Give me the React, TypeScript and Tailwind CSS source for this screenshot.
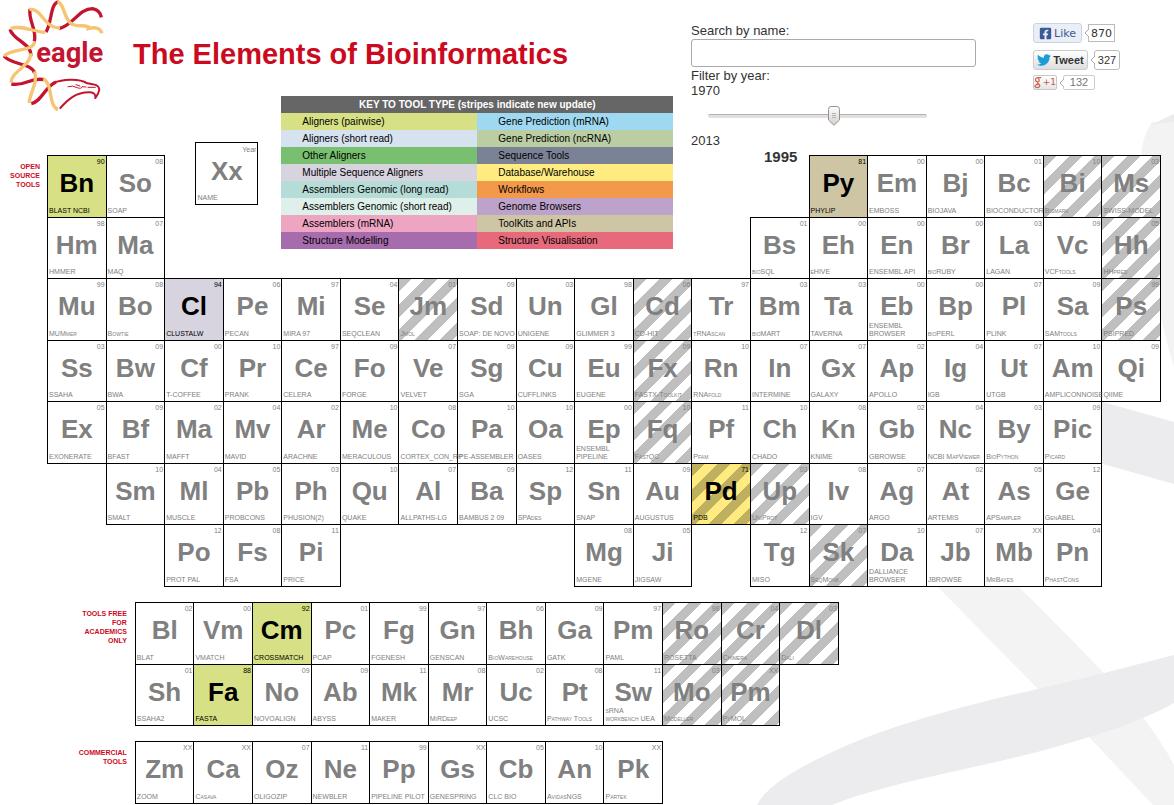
import { useState } from "react";
import { FaFacebookSquare, FaTwitter } from "react-icons/fa";

type Tool = { col: number; row: number; symbol: string; year: string; name: string; striped?: boolean; tone?: string };

const TONES: Record<string, string> = {
  pairwise: "bg-[#d7e084]",
  multiple: "bg-[#d7d3df]",
  toolkit: "bg-[#cec5a5]",
  database: "bg-[#ffeb80]",
};

const TONE_OF: Record<string, string> = {
  "BLAST NCBI": "pairwise",
  CLUSTALW: "multiple",
  PHYLIP: "toolkit",
  PDB: "database",
  CROSSMATCH: "pairwise",
  FASTA: "pairwise",
};

/* A run is a strip of neighbouring tools: "Symbol|year|name", with a trailing "|*" for a recent update. */
function run(row: number, startCol: number, items: string[]): Tool[] {
  return items.map((item, i) => {
    const [symbol, year, name, mark] = item.split("|");
    return { col: startCol + i, row, symbol, year, name, striped: mark === "*", tone: TONE_OF[name] };
  });
}

const OPEN_SOURCE: Tool[] = [
  ...run(1, 1, ["Bn|90|BLAST NCBI", "So|08|SOAP"]),
  ...run(1, 14, ["Py|81|PHYLIP", "Em|00|EMBOSS", "Bj|00|BIOJAVA", "Bc|01|BIOCONDUCTOR", "Bi|10|Bismark|*", "Ms|03|SWISS-MODEL|*"]),
  ...run(2, 1, ["Hm|98|HMMER", "Ma|07|MAQ"]),
  ...run(2, 13, ["Bs|01|bioSQL", "Eh|00|eHIVE", "En|00|ENSEMBL API", "Br|00|bioRUBY", "La|03|LAGAN", "Vc|09|VCFtools", "Hh|05|HHpred|*"]),
  ...run(3, 1, [
    "Mu|99|MUMmer", "Bo|08|Bowtie", "Cl|94|CLUSTALW", "Pe|06|PECAN", "Mi|97|MIRA 97", "Se|04|SEQCLEAN", "Jm|01|Jmol|*",
    "Sd|09|SOAP: DE NOVO", "Un|03|UNIGENE", "Gl|98|GLIMMER 3", "Cd|06|CD-HIT|*", "Tr|97|tRNAscan", "Bm|03|bioMART",
    "Ta|03|TAVERNA", "Eb|00|ENSEMBL\nBROWSER", "Bp|00|bioPERL", "Pl|07|PLINK", "Sa|09|SAMtools", "Ps|99|PSIPRED|*",
  ]),
  ...run(4, 1, [
    "Ss|03|SSAHA", "Bw|09|BWA", "Cf|00|T-COFFEE", "Pr|10|PRANK", "Ce|97|CELERA", "Fo|09|FORGE", "Ve|07|VELVET", "Sg|09|SGA",
    "Cu|09|CUFFLINKS", "Eu|99|EUGENE", "Fx|09|FASTX-Toolkit|*", "Rn|10|RNAfold", "In|07|INTERMINE", "Gx|07|GALAXY",
    "Ap|02|APOLLO", "Ig|04|IGB", "Ut|07|UTGB", "Am|10|AMPLICONNOISE", "Qi|09|QIIME",
  ]),
  ...run(5, 1, [
    "Ex|05|EXONERATE", "Bf|09|BFAST", "Ma|02|MAFFT", "Mv|04|MAVID", "Ar|02|ARACHNE", "Me|10|MERACULOUS", "Co|08|CORTEX_CON_RP",
    "Pa|10|PE-ASSEMBLER", "Oa|10|OASES", "Ep|00|ENSEMBL\nPIPELINE", "Fq|10|FastQC|*", "Pf|11|Pfam", "Ch|10|CHADO",
    "Kn|08|KNIME", "Gb|02|GBROWSE", "Nc|04|NCBI MapViewer", "By|03|BioPython", "Pic|09|Picard",
  ]),
  ...run(6, 2, [
    "Sm|10|SMALT", "Ml|04|MUSCLE", "Pb|05|PROBCONS", "Ph|03|PHUSION(2)", "Qu|10|QUAKE", "Al|07|ALLPATHS-LG", "Ba|09|BAMBUS 2 09",
    "Sp|12|SPAdes", "Sn|11|SNAP", "Au|09|AUGUSTUS", "Pd|71|PDB|*", "Up|03|UniProt|*", "Iv|08|IGV", "Ag|07|ARGO",
    "At|02|ARTEMIS", "As|05|APSampler", "Ge|12|GenABEL",
  ]),
  ...run(7, 3, ["Po|12|PROT PAL", "Fs|08|FSA", "Pi|11|PRICE"]),
  ...run(7, 10, ["Mg|08|MGENE", "Ji|05|JIGSAW"]),
  ...run(7, 13, ["Tg|12|MISO", "Sk|07|SeqMonk|*", "Da|10|DALLIANCE\nBROWSER", "Jb|07|JBROWSE", "Mb|XX|MrBayes", "Pn|04|PhastCons"]),
];

const ACADEMIC: Tool[] = [
  ...run(1, 1, [
    "Bl|02|BLAT", "Vm|00|VMATCH", "Cm|92|CROSSMATCH", "Pc|01|PCAP", "Fg|99|FGENESH", "Gn|97|GENSCAN", "Bh|06|BioWarehouse",
    "Ga|09|GATK", "Pm|97|PAML", "Ro|98|ROSETTA|*", "Cr|04|Chimera|*", "Dl|03|Dali|*",
  ]),
  ...run(2, 1, [
    "Sh|01|SSAHA2", "Fa|88|FASTA", "No|09|NOVOALIGN", "Ab|09|ABYSS", "Mk|11|MAKER", "Mr|08|MiRDeep", "Uc|02|UCSC",
    "Pt|08|Pathway Tools", "Sw|11|sRNA\nworkbench UEA", "Mo|03|Modeller|*", "Pm|XX|PyMOL|*",
  ]),
];

const COMMERCIAL: Tool[] = run(1, 1, [
  "Zm|XX|ZOOM", "Ca|XX|Casava", "Oz|07|OLIGOZIP", "Ne|11|NEWBLER", "Pp|99|PIPELINE PILOT", "Gs|XX|GENESPRING",
  "Cb|05|CLC BIO", "An|10|AvidasNGS", "Pk|XX|Partek",
]);

const KEY_ROWS = [
  ["Aligners (pairwise)", "bg-[#d7e084]", "Gene Prediction (mRNA)", "bg-[#9ed8f1]"],
  ["Aligners (short read)", "bg-[#d6e2f0]", "Gene Prediction (ncRNA)", "bg-[#bbcda3]"],
  ["Other Aligners", "bg-[#78bf70]", "Sequence Tools", "bg-[#7b8296]"],
  ["Multiple Sequence Aligners", "bg-[#d7d3df]", "Database/Warehouse", "bg-[#ffec80]"],
  ["Assemblers Genomic (long read)", "bg-[#b5dcd7]", "Workflows", "bg-[#f3994b]"],
  ["Assemblers Genomic (short read)", "bg-[#dff0eb]", "Genome Browsers", "bg-[#bda3cb]"],
  ["Assemblers (mRNA)", "bg-[#eea5c2]", "ToolKits and APIs", "bg-[#cec5a5]"],
  ["Structure Modelling", "bg-[#a76cad]", "Structure Visualisation", "bg-[#e66a7b]"],
];

const STRIPES = "bg-[repeating-linear-gradient(135deg,rgba(0,0,0,0.25)_0px,rgba(0,0,0,0.25)_9px,transparent_9px,transparent_18px)]";

function fullYear(year: string) {
  const n = Number(year);
  if (Number.isNaN(n)) return Infinity;
  return n > 50 ? 1900 + n : 2000 + n;
}

/* Each tool is two half-columns wide, so a board can start midway between two columns of another. */
function Tiles({ tools, limit, query }: { tools: Tool[]; limit: number; query: string }) {
  return (
    <>
      {tools.map((t) => {
        const active = fullYear(t.year) <= limit && t.name.toLowerCase().includes(query.toLowerCase());
        return (
          <li
            key={`${t.row}-${t.col}`}
            className={`-mb-px -mr-px flex min-w-0 flex-col border border-black ${active ? "text-black" : "text-[#808080]"} ${
              active && t.tone ? TONES[t.tone] : "bg-white"
            } ${t.striped ? STRIPES : ""}`}
            style={{ gridRow: t.row, gridColumn: `${(t.col - 1) * 2 + 1} / span 2` }}
          >
            <span className="h-[13px] pr-px text-right text-[7px] leading-3">{t.year}</span>
            <span className="text-center text-[26px] leading-[28px] font-bold">{t.symbol}</span>
            <span className="z-10 mt-auto pb-[2px] pl-px text-[7px] leading-[8px] whitespace-pre [font-variant:small-caps]">{t.name}</span>
          </li>
        );
      })}
    </>
  );
}

function EagleLogo() {
  const red = "#c3152f";
  const gold = "#f5c573";
  return (
    <svg viewBox="0 0 312 336" className="h-[112px] w-[104px]" role="img" aria-label="eagle">
      <g fill="none" strokeWidth="10">
        <path stroke={red} d="M90 27C84 62 112 90 103 124" />
        <path stroke={red} d="M138 96C156 70 150 8 176 6" />
        <path stroke={red} d="M176 86C222 76 234 26 278 26Q300 30 304 52" />
        <path stroke={red} d="M30 88C38 120 98 132 92 168" />
        <path stroke={red} d="M12 168C34 196 96 188 104 220" />
        <path stroke={red} d="M34 252C76 260 92 230 132 239" />
        <path stroke={red} d="M94 311C126 304 134 260 168 246" />
        <path stroke={gold} d="M88 29C112 22 128 58 146 72Q162 84 180 84" />
        <path stroke={gold} d="M172 6C192 8 190 48 210 68C226 82 244 74 264 80V86Q298 76 306 100" />
        <path stroke={gold} d="M32 85C64 74 100 96 136 97" />
        <path stroke={gold} d="M12 168C40 142 98 156 104 126" />
        <path stroke={gold} d="M92 160C92 200 34 212 33 248" />
        <path stroke={gold} d="M87 309C92 270 114 250 104 214" />
        <path stroke={gold} d="M130 236C160 252 144 318 174 329" />
      </g>
      <g fill="none" stroke={red} strokeWidth="6" strokeLinecap="round" strokeLinejoin="round">
        <path d="M160 249C186 238 236 234 262 250C280 254 296 252 298 268Q296 282 286 294Q288 278 270 277C226 276 202 300 181 324" />
        <path strokeWidth="3" d="M204 260Q218 255 232 263Q244 268 246 260L258 261M228 254L240 258M264 262L286 262" />
      </g>
      <text x="109" y="186" fill={red} className="font-[Roboto,sans-serif] text-[82px] font-bold">
        eagle
      </text>
    </svg>
  );
}

function Ribbons() {
  return (
    <svg className="absolute right-0 top-0 -z-10 h-[805px] w-[434px]" viewBox="740 0 434 805" aria-hidden="true">
      <path fill="#f3f3f3" d="M1174 122H1152Q1141 138 1141 160C1141 220 1158 320 1174 366Z" />
      <path fill="#ececee" d="M1174 114Q1160 120 1150 126Q1162 122 1174 122Z" />
      <path fill="#ececee" d="M1060 390L1103 402L1174 422V484L1103 464L1060 450Z" />
      <path fill="#f3f3f3" d="M930 579L1038 689L1089 737L1153 805H1174V765Q1162 742 1144 719Q1126 696 1104 673C1074 643 1044 610 1010 579Z" />
      <path fill="#ececee" d="M1174 655Q1106 673 1038 689C960 706 880 728 826 755Q768 782 757 805H832C900 778 1000 766 1089 737Q1140 722 1174 703Z" />
    </svg>
  );
}

function Bubble({ children, className }: { children: string; className: string }) {
  return (
    <span className={`relative ml-[6px] flex items-center justify-center border bg-white ${className}`}>
      <svg viewBox="0 0 5 8" className="absolute -left-[5px] h-2 w-[5px]" aria-hidden="true">
        <path d="M5 0L1 4L5 8" fill="#fff" stroke="#aaa" />
      </svg>
      {children}
    </span>
  );
}

export default function App() {
  const [query, setQuery] = useState("");
  const [year, setYear] = useState(1995);
  const ratio = (year - 1970) / 43;
  const label = "text-right text-[7px] leading-[9px] font-bold text-[#cc0a1e] pt-[7px]";

  return (
    <div className="relative isolate min-h-screen overflow-hidden bg-white font-['Liberation_Sans',Arial,sans-serif] text-[#333]">
      <Ribbons />
      <header className="grid h-[155px] grid-cols-[691fr_483fr]">
        <div className="flex items-start">
          <EagleLogo />
          <h1 className="ml-[29px] pt-9 text-[29px] leading-[36px] font-bold whitespace-nowrap text-[#cb0a20]">The Elements of Bioinformatics</h1>
        </div>
        <div className="flex items-start pt-[23px]">
          <form className="w-[285px] text-[13px] leading-[15px]" onSubmit={(e) => e.preventDefault()}>
            <label htmlFor="name" className="block">Search by name:</label>
            <input
              id="name"
              value={query}
              onChange={(e) => setQuery(e.target.value)}
              className="mt-px block h-7 w-full rounded-[3px] border border-[#aaa] bg-white px-2"
            />
            <label htmlFor="year" className="mt-px block">Filter by year:</label>
            <div>1970</div>
            <div className="relative ml-[17px] flex h-[35px] w-[219px] items-center">
              <input
                id="year"
                type="range"
                min={1970}
                max={2013}
                value={year}
                onChange={(e) => setYear(Number(e.target.value))}
                className="h-1 w-full appearance-none rounded-sm border-t border-[#b5b0b0] bg-[#e3dfdf] [&::-webkit-slider-thumb]:h-5 [&::-webkit-slider-thumb]:w-3 [&::-webkit-slider-thumb]:appearance-none [&::-webkit-slider-thumb]:opacity-0"
              />
              <svg
                viewBox="0 0 12 20"
                className="pointer-events-none absolute h-5 w-3"
                style={{ left: Math.round(ratio * 207) }}
                aria-hidden="true"
              >
                <defs>
                  <linearGradient id="thumb" x1="0" y1="0" x2="0" y2="1">
                    <stop offset="0" stopColor="#fff" />
                    <stop offset="1" stopColor="#d2cecb" />
                  </linearGradient>
                </defs>
                <path d="M3 .5H9Q11.500 .5 11.500 3.500V14L6 19.300L.5 14V3.500Q.5 .5 3 .5Z" fill="url(#thumb)" stroke="#979390" />
                <path d="M4 7.500H8M4 9.500H8M4 11.500H8" stroke="#b5b1ae" />
              </svg>
            </div>
            <div>2013</div>
            <output htmlFor="year" className="ml-[73px] block text-[15px] leading-[17px] font-bold">{year}</output>
          </form>
          <div className="ml-[57px] flex flex-col items-start text-[11px] leading-none">
            <div className="flex h-5 items-center">
              <button type="button" className="flex h-5 w-[49px] items-center justify-center gap-[2px] rounded-[3px] border border-[#cad4e7] bg-[#eceef5] font-['DejaVu_Sans',sans-serif] text-[#3b5998]">
                <FaFacebookSquare size={13} />
                Like
              </button>
              <Bubble className="h-[18px] w-[27px] border-[#bbb] font-['DejaVu_Sans',sans-serif]">870</Bubble>
            </div>
            <div className="mt-[7px] flex h-5 items-center">
              <button type="button" className="flex h-5 w-[55px] items-center justify-center gap-[2px] rounded-[3px] border border-[#ccc] bg-linear-to-b from-white to-[#dedede] font-bold">
                <FaTwitter size={14} color="#1b9cd8" />
                Tweet
              </button>
              <Bubble className="h-5 w-[26px] rounded-[3px] border-[#bbb]">327</Bubble>
            </div>
            <div className="mt-[5px] flex h-[15px] items-center">
              <button type="button" aria-label="Google +1" className="flex h-[15px] w-6 items-center rounded-[2px] border border-[#c8c8c8] bg-linear-to-b from-white to-[#e6e6e6] text-[9px] text-[#c25a4a]">
                <svg viewBox="0 0 8 13" className="h-[13px] w-2" fill="none" stroke="#cf6354" strokeWidth="1.300" aria-hidden="true">
                  <path d="M7.500 1.500H3.500A2.200 2.200 0 1 0 5 5.500Q6 4 4.500 2M4 6Q3 7 5 8Q7 10 5 11.300Q2.500 12.300 1 10.800Q.5 9 4.500 8.200" />
                </svg>
                <b className="ml-px font-['DejaVu_Sans',sans-serif] font-normal">+1</b>
              </button>
              <Bubble className="h-[15px] w-8 rounded-[2px] border-[#ccc] text-[#777]">132</Bubble>
            </div>
          </div>
        </div>
      </header>

      <main className="pr-[14px]">
        <section className="flex">
          <h2 className={`${label} w-[47px] pr-[7px]`}>OPEN SOURCE TOOLS</h2>
          <ul className="grid h-[431px] flex-1 grid-cols-38 grid-rows-7">
            <Tiles tools={OPEN_SOURCE} limit={year} query={query} />
            <li className="col-start-6 row-start-1 -mt-[13px] ml-[2px] flex h-[63px] w-[63px] flex-col border border-black bg-white text-[#808080]">
              <span className="h-[14px] pr-px text-right text-[7px] leading-[14px]">Year</span>
              <span className="text-center text-[26px] leading-[28px] font-bold">Xx</span>
              <span className="mt-auto pb-[2px] pl-px text-[7px] leading-[8px]">NAME</span>
            </li>
            <li className="col-span-14 col-start-9 row-span-2 row-start-1 -mt-[59px]">
              <table className="w-[392px] table-fixed border-collapse text-[10px] leading-[17px] text-black">
                <thead>
                  <tr>
                    <th colSpan={2} className="bg-[#666] p-0 text-center font-bold text-white">KEY TO TOOL TYPE (stripes indicate new update)</th>
                  </tr>
                </thead>
                <tbody>
                  {KEY_ROWS.map(([left, leftTone, right, rightTone]) => (
                    <tr key={left}>
                      <td className={`${leftTone} p-0 pl-[21px] whitespace-nowrap`}>{left}</td>
                      <td className={`${rightTone} p-0 pl-[21px] whitespace-nowrap`}>{right}</td>
                    </tr>
                  ))}
                </tbody>
              </table>
            </li>
          </ul>
        </section>

        <section className="mt-4 pl-[47px]">
          <div className="grid grid-cols-38">
            <h2 className={`${label} col-span-3 pr-2`}>TOOLS FREE<br />FOR<br />ACADEMICS<br />ONLY</h2>
            <ul className="col-span-35 grid h-[123px] grid-cols-35 grid-rows-2">
              <Tiles tools={ACADEMIC} limit={year} query={query} />
            </ul>
          </div>
        </section>

        <section className="mt-4 pl-[47px]">
          <div className="grid grid-cols-38">
            <h2 className={`${label} col-span-3 pr-2`}>COMMERCIAL<br />TOOLS</h2>
            <ul className="col-span-35 grid h-[62px] grid-cols-35 grid-rows-1">
              <Tiles tools={COMMERCIAL} limit={year} query={query} />
            </ul>
          </div>
        </section>
      </main>
    </div>
  );
}
